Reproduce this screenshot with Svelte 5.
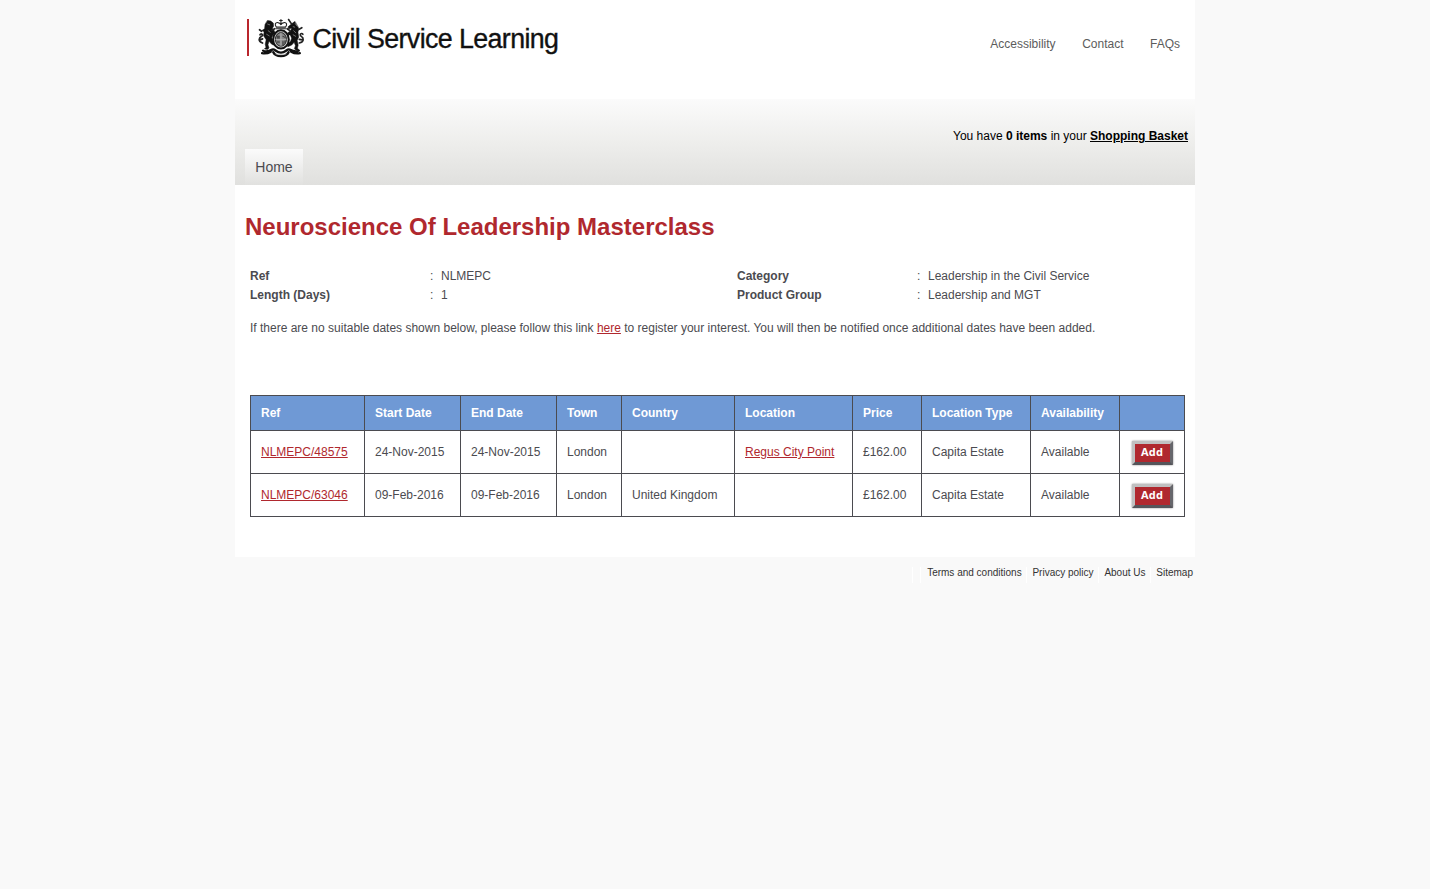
<script>
  const columns = [
    ['Ref', 114], ['Start Date', 96], ['End Date', 96], ['Town', 65], ['Country', 113],
    ['Location', 118], ['Price', 69], ['Location Type', 109], ['Availability', 89], ['', 65]
  ];
  const rows = [
    { ref: 'NLMEPC/48575', date: '24-Nov-2015', country: '', location: 'Regus City Point' },
    { ref: 'NLMEPC/63046', date: '09-Feb-2016', country: 'United Kingdom', location: '' }
  ];
</script>

<div class="page">
  <header>
    <svg class="logo" width="360" height="60" viewBox="0 0 360 60" role="img" aria-label="Civil Service Learning">
      <rect x="12" y="9" width="2" height="37" fill="#b9262d" />
      <g transform="translate(23.500 8.500) scale(1.020)" stroke-linecap="round" stroke-linejoin="round">
        <!-- crown -->
        <path d="M17.5 8.5C15.5 6 16.5 3.7 19 4c1.5.1 2.4.9 3 2 .6-1.100 1.500-1.900 3-2 2.500-.3 3.500 2 1.500 4.500zM22 5V1M20.700 2h2.600M17.500 10h9" fill="none" stroke="#222" stroke-width="1.100" />
        <!-- lion -->
        <path d="M9 2l3 .5 2.500 2 .3 3-1.200 2 1.900 2.500 1 3-2 .8-1.500 3 1 3 3 3-.5 2-3.500-1.500-2.700-3-1 3.500 1 3-1.500 1.600-3-.6 1.500-1.500-.7-3 .9-4.500L5 17l.5-4-2.200-1.200L6 10l.4-4z" fill="#111" stroke="#111" stroke-width=".5" />
        <path d="M4 24C-1 22 .5 19 3 17.500S2 14 1.500 16M4 20l-2.500 1M13 11.500l3-1.500M3 12.500L1 11" fill="none" stroke="#222" stroke-width="1.700" />
        <path d="M9 5.500l2 .7M9.500 12l2 1.500M8 15.500l2.500 1.500" fill="none" stroke="#aaa" stroke-width=".6" />
        <!-- unicorn -->
        <path d="M35.500 3l-3 2.200-3.500 3 .5 2 3-.8-.8 2.600-2.500 1.500-.5 2.200 2.600.6 1.200 3-1 3-3.500 3.500.8 1.800 3.700-1.500 2.500-2.800 1.200 3.300-1 3 1.500 1.600 3-.6-1.500-1.500.7-3-1-4.500 1.500-3.500-.7-4.500.6-4z" fill="#111" stroke="#111" stroke-width=".5" />
        <path d="M32.500 5.500L29.500 1M40 24c5-1 4.500-5 2-6.500s0-4 1.500-2M40 20.500l3.500.5M39 11l3.500-2M31 12l-3-2" fill="none" stroke="#222" stroke-width="1.600" />
        <path d="M34 8l1.500.5M34.500 12l2 2M34 16l2.500 1.500M36 5l1.500 2" fill="none" stroke="#aaa" stroke-width=".6" />
        <!-- shield and garter -->
        <ellipse cx="22" cy="20.500" rx="7.700" ry="8.900" fill="#ddd" stroke="#111" stroke-width="2" />
        <ellipse cx="22" cy="20.500" rx="5.400" ry="6.700" fill="#888" stroke="#333" stroke-width="1" />
        <path d="M22 14v13M17 20.500h10" stroke="#bbb" stroke-width=".7" />
        <path d="M18.500 17.500h2M18.500 19h2M24 17.500l2 1M18.500 23h2M24 22.500v3M26 22v2" stroke="#333" stroke-width="1" />
        <!-- motto ribbon -->
        <path d="M4.500 31.500c3 2 6 .5 9-1 2.500-1.300 3.500 3 8.500 3s6-4.300 8.500-3c3 1.500 6 3 9 1M3.500 34c3 .5 6 0 8.500-1.500M40.500 34c-3 .5-6 0-8.500-1.500" fill="none" stroke="#111" stroke-width="2.300" />
        <path d="M14.500 33c1.500 3.200 4 3.700 7.500 3.700s6-.5 7.500-3.700" fill="none" stroke="#111" stroke-width="2.400" />
        <path d="M17 34.800c3 1 7 1 10 0" fill="none" stroke="#ddd" stroke-width=".6" />
      </g>
      <text x="77.500" y="38" textLength="246.500" lengthAdjust="spacing">Civil Service Learning</text>
    </svg>
    <nav class="top"><span>Accessibility</span><span>Contact</span><span>FAQs</span></nav>
  </header>

  <div class="band">
    <p class="basket">You have <b>0 items</b> in your <b class="u">Shopping Basket</b></p>
    <div class="tab">Home</div>
  </div>

  <main>
    <h1>Neuroscience Of Leadership Masterclass</h1>
    <dl>
      <dt>Ref</dt><dd><i>:</i>NLMEPC</dd>
      <dt>Category</dt><dd><i>:</i>Leadership in the Civil Service</dd>
      <dt>Length (Days)</dt><dd><i>:</i>1</dd>
      <dt>Product Group</dt><dd><i>:</i>Leadership and MGT</dd>
    </dl>
    <p class="note">If there are no suitable dates shown below, please follow this link <span class="link">here</span> to register your interest. You will then be notified once additional dates have been added.</p>
    <table>
      <colgroup>{#each columns as c}<col style="width:{c[1]}px" />{/each}</colgroup>
      <thead><tr>{#each columns as c}<th>{c[0]}</th>{/each}</tr></thead>
      <tbody>
        {#each rows as r}
          <tr>
            <td><span class="link">{r.ref}</span></td>
            <td>{r.date}</td><td>{r.date}</td><td>London</td><td>{r.country}</td>
            <td><span class="link">{r.location}</span></td>
            <td>£162.00</td><td>Capita Estate</td><td>Available</td>
            <td class="action"><button>Add</button></td>
          </tr>
        {/each}
      </tbody>
    </table>
  </main>
</div>
<footer>
  <span class="empty"></span><span>Terms and conditions</span><span>Privacy policy</span><span>About Us</span><span>Sitemap</span>
</footer>

<style>
  :global(body) { margin: 0; background: #f9f9f9; }
  .page, footer { width: 960px; margin: 0 auto; font-family: "Liberation Sans", Arial, sans-serif; font-size: 12px; color: #4b4b50; }
  .page { background: #fff; height: 557px; }
  header { display: flex; justify-content: space-between; height: 99px; }
  .logo { margin-top: 10px; display: block; }
  .logo text { font: 26.8px "Liberation Sans", Arial, sans-serif; fill: #111; stroke: #111; stroke-width: .35px; }
  .top { display: flex; gap: 26.5px; padding: 37px 15px 0 0; line-height: 14px; color: #5c5c5c; }
  .band { height: 86px; box-sizing: border-box; padding: 30px 7px 0 10px; background: linear-gradient(#fbfbfb, #eeeeec 50%, #e0e0de); }
  .basket { margin: 0; line-height: 14px; text-align: right; color: #000; }
  .u, .link { text-decoration: underline; }
  .tab { width: 58px; height: 36px; margin-top: 6px; box-sizing: border-box; padding-top: 10px; line-height: 16px; font-size: 14px; text-align: center; background: linear-gradient(#fbfbfb, #e1e1df); }
  main { padding: 0 10px; }
  h1 { margin: 0; padding-top: 28px; line-height: 28px; font-size: 24px; color: #b0282e; }
  dl { display: grid; grid-template-columns: 180px 307px 180px 1fr; margin: 26px 0 0 5px; line-height: 19px; }
  dt { font-weight: bold; }
  dd { margin: 0; display: flex; }
  i { font-style: normal; width: 11px; }
  .note { margin: 16px 0 0 5px; line-height: 14px; }
  .link { color: #b0282e; }
  table { table-layout: fixed; width: 935px; margin: 60px 0 0 5px; border-collapse: separate; border-spacing: 0; border: solid #4b4b50; border-width: 1px 0 0 1px; }
  th, td { box-sizing: border-box; padding: 0 10px; border: solid #4b4b50; border-width: 0 1px 1px 0; text-align: left; white-space: nowrap; }
  th { height: 35px; background: #6f99d5; color: #fff; }
  td { height: 43px; }
  td.action { padding: 1px 0 0 12px; }
  button { display: block; width: 41px; height: 24px; box-sizing: border-box; padding: 0 1px 0 0; border: 3px solid; border-color: #c0c0c0 #66666b #55555a #c0c0c0; border-radius: 1px; box-shadow: 0 0 2px #777; background: #b0282e; color: #fff; font: bold 11px/16px "Open Sans", "Noto Sans", sans-serif; padding-bottom: 2px; letter-spacing: .2px; }
  footer { display: flex; justify-content: flex-end; box-sizing: border-box; padding: 10px 2px 0 0; font-size: 10px; line-height: 12px; color: #333; }
  footer span { height: 16px; border-left: 1px solid #fff; padding: 0 4px 0 5.8px; white-space: nowrap; }
  footer span:last-child { padding-right: 0; }
  footer .empty { padding: 0 7px 0 0; }
</style>
